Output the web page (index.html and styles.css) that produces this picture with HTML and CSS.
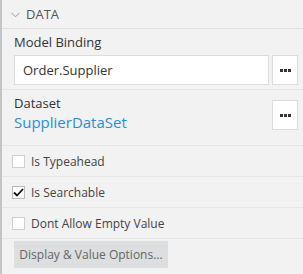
FILE: index.html
```html
<!DOCTYPE html>
<html lang="en">
<head>
    <meta charset="UTF-8">
    <title>Data</title>
    <link rel="stylesheet" href="styles.css">
</head>
<body>
    <div class="panel">
        <div class="header">
            <svg class="chevron" width="9" height="6" viewBox="0 0 9 6">
                <path d="M0.5 0.8 L4.5 4.8 L8.5 0.8" fill="none" stroke="#9a9a9a" stroke-width="1"/>
            </svg>
            <span>DATA</span>
        </div>

        <div class="section binding">
            <div class="label">Model Binding</div>
            <div class="input-row">
                <div class="input">Order.Supplier</div>
                <button class="more">
                    <svg width="11" height="3" viewBox="0 0 11 3">
                        <rect x="0" y="0" width="3" height="3" fill="#333"/>
                        <rect x="4" y="0" width="3" height="3" fill="#333"/>
                        <rect x="8" y="0" width="3" height="3" fill="#333"/>
                    </svg>
                </button>
            </div>
        </div>

        <div class="section dataset">
            <div class="dataset-text">
                <div class="label">Dataset</div>
                <div class="link">SupplierDataSet</div>
            </div>
            <button class="more">
                <svg width="11" height="3" viewBox="0 0 11 3">
                    <rect x="0" y="0" width="3" height="3" fill="#333"/>
                    <rect x="4" y="0" width="3" height="3" fill="#333"/>
                    <rect x="8" y="0" width="3" height="3" fill="#333"/>
                </svg>
            </button>
        </div>

        <div class="check-row">
            <span class="box"></span>
            <span>Is Typeahead</span>
        </div>
        <div class="check-row">
            <span class="box checked">
                <svg width="11" height="9" viewBox="0 0 11 9">
                    <path d="M1 4.5 L4 7.5 L10 1" fill="none" stroke="#111" stroke-width="1.8"/>
                </svg>
            </span>
            <span>Is Searchable</span>
        </div>
        <div class="check-row">
            <span class="box"></span>
            <span>Dont Allow Empty Value</span>
        </div>

        <div class="section options">
            <button class="options-btn">Display &amp; Value Options...</button>
        </div>
    </div>
</body>
</html>
```

FILE: styles.css
```css
body {
    margin: 0;
    font-family: "Open Sans", "Noto Sans", sans-serif;
    font-size: 12px;
    color: #333;
    background-color: #f2f2f2;
}
.panel {
    height: 274px;
    border-left: 2px solid #c4c4c4;
    background-color: #f2f2f2;
    box-sizing: border-box;
}
.header {
    height: 28px;
    display: flex;
    align-items: center;
    gap: 6px;
    padding-left: 9px;
    border-bottom: 1px solid #e0e0e0;
    color: #555;
    font-size: 13px;
}
.chevron {
    margin-top: 1px;
}
.section {
    border-bottom: 1px solid #e6e6e6;
}
.binding {
    height: 61px;
    padding: 3px 5px 0 12px;
    box-sizing: border-box;
}
.label {
    font-size: 13px;
    line-height: 20px;
    color: #333;
}
.input-row {
    display: flex;
    gap: 3px;
    margin-top: 3px;
}
.input {
    flex: 1;
    height: 30px;
    box-sizing: border-box;
    border: 1px solid #dcdcdc;
    background-color: #fff;
    padding-left: 8px;
    line-height: 28px;
    font-size: 13px;
    color: #333;
}
.more {
    width: 26px;
    height: 30px;
    box-sizing: border-box;
    border: 1px solid #dcdcdc;
    background-color: #fff;
    padding: 0;
    display: flex;
    align-items: center;
    justify-content: center;
}
.dataset {
    height: 56px;
    display: flex;
    justify-content: space-between;
    padding: 4px 5px 0 12px;
    box-sizing: border-box;
}
.dataset .more {
    margin-top: 6px;
}
.dataset .label {
    line-height: 18px;
}
.link {
    color: #2a8fce;
    font-size: 15px;
    line-height: 20px;
}
.check-row {
    height: 30px;
    display: flex;
    align-items: center;
    gap: 6px;
    padding-left: 10px;
    border-bottom: 1px solid #e6e6e6;
    color: #444;
    font-size: 12px;
}
.box {
    width: 13px;
    height: 13px;
    box-sizing: border-box;
    border: 1px solid #cfcfcf;
    background-color: #fff;
    display: flex;
    align-items: center;
    justify-content: center;
}
.box.checked {
    border-color: #bbb;
}
.options {
    height: 36px;
    padding: 2px 0 0 12px;
    box-sizing: border-box;
}
.options-btn {
    height: 27px;
    width: 154px;
    border: none;
    background-color: #dcdedf;
    color: #666;
    font-family: "Open Sans", "Noto Sans", sans-serif;
    font-size: 12px;
    padding: 0;
}
```
